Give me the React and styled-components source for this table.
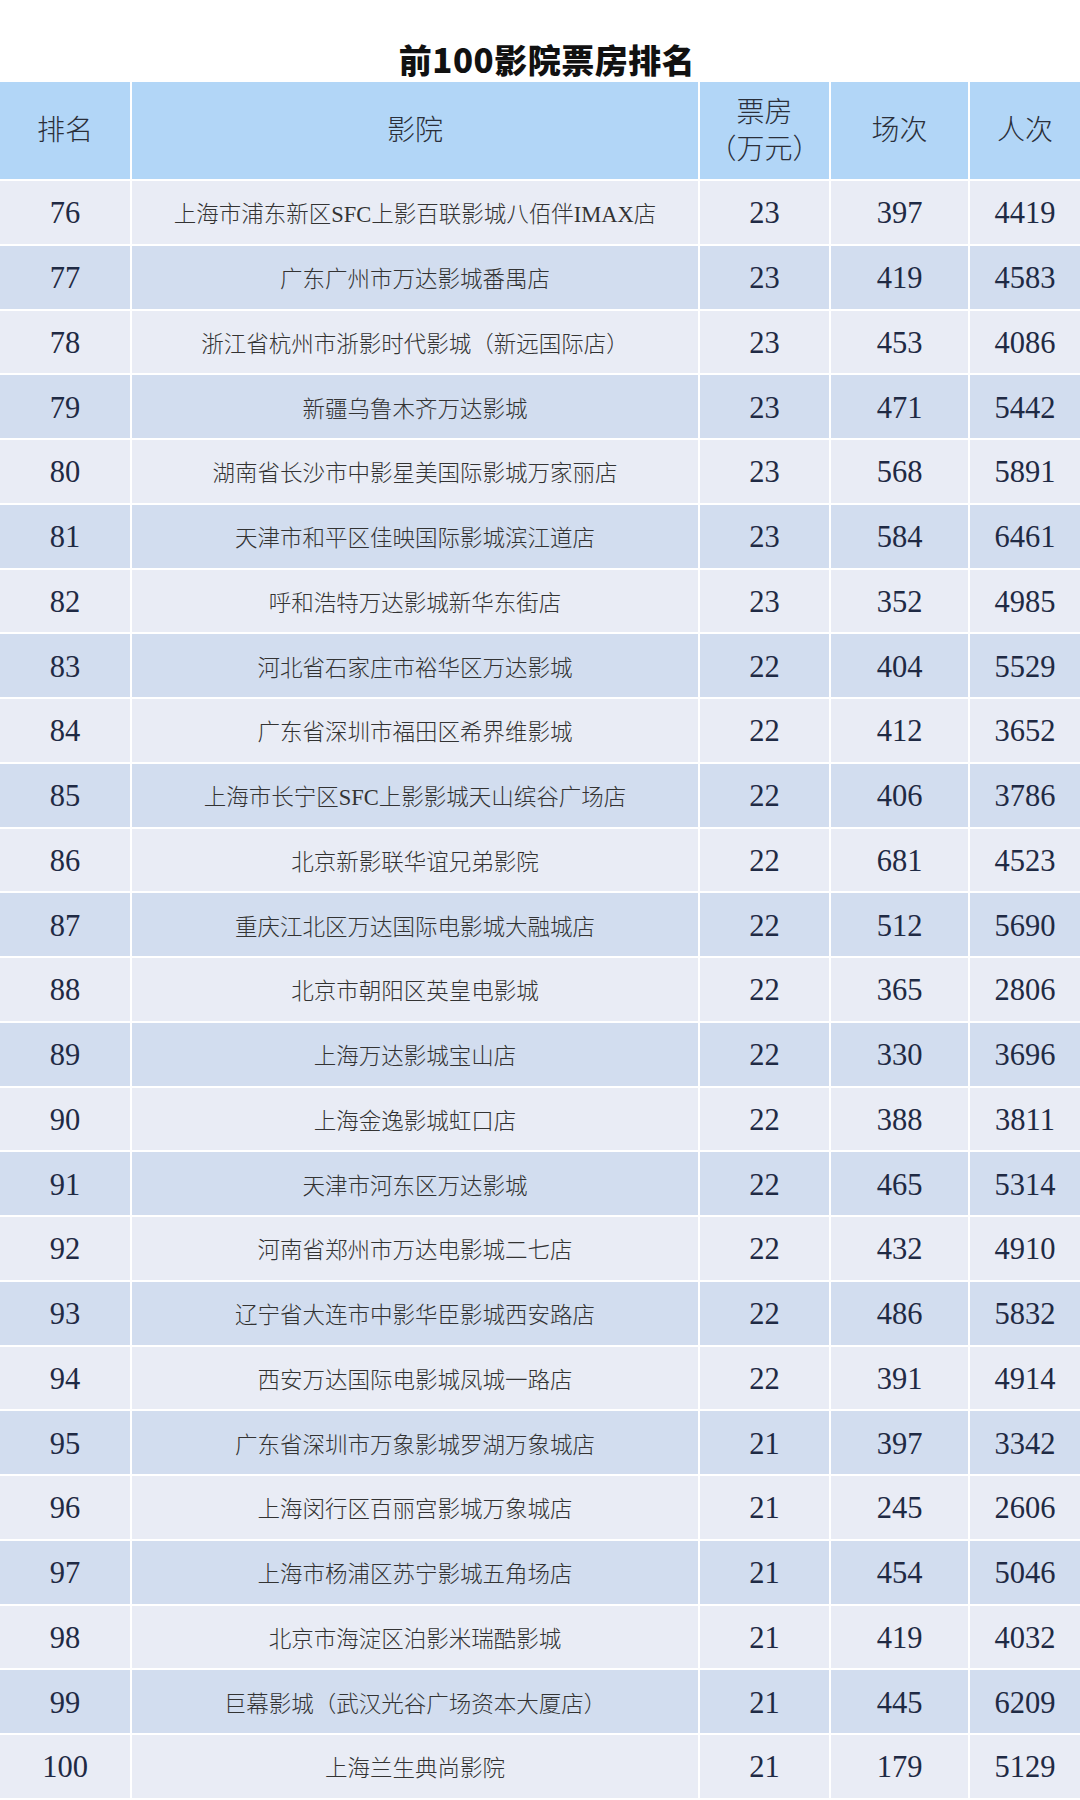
import React from 'react';
import styled, { createGlobalStyle } from 'styled-components';

const serif = `"Liberation Serif", "Noto Sans CJK SC", serif`;

const GlobalStyle = createGlobalStyle`
  html, body {
    margin: 0;
    padding: 0;
    background: #ffffff;
  }
`;

const Page = styled.div`
  width: 1080px;
  background: #ffffff;
`;

const Title = styled.h1`
  margin: 0;
  height: 82px;
  display: flex;
  align-items: flex-end;
  justify-content: center;
  padding: 0 0 6px 14px;
  box-sizing: border-box;
  font-family: "Noto Sans CJK SC", "Noto Sans", sans-serif;
  font-weight: 900;
  font-size: 33px;
  line-height: 1;
  color: #111111;
  letter-spacing: 0.5px;
`;

const Table = styled.div`
  display: grid;
  grid-template-columns: 130px 566px 129px 137px 1fr;
  grid-template-rows: 97px;
  grid-auto-rows: 62.76px;
  gap: 2px;
  background: #ffffff;
`;

const HeadCell = styled.div`
  display: flex;
  flex-direction: column;
  align-items: center;
  justify-content: center;
  background: #b2d6f7;
  font-family: ${serif};
  font-size: 28px;
  font-weight: 300;
  line-height: 37px;
  color: #2a2f3a;
  text-align: center;
`;

const Cell = styled.div`
  display: flex;
  align-items: center;
  justify-content: center;
  box-sizing: border-box;
  padding-top: ${(p) => (p.$name ? '0' : '3px')};
  background: ${(p) => (p.$alt ? '#d2ddef' : '#e9ecf5')};
  font-family: ${serif};
  font-size: ${(p) => (p.$name ? '22.5px' : '30.5px')};
  font-weight: ${(p) => (p.$name ? 300 : 400)};
  color: ${(p) => (p.$name ? '#333333' : '#1f2a44')};
  white-space: nowrap;
`;

const rows = [
  [76, '上海市浦东新区SFC上影百联影城八佰伴IMAX店', 23, 397, 4419],
  [77, '广东广州市万达影城番禺店', 23, 419, 4583],
  [78, '浙江省杭州市浙影时代影城（新远国际店）', 23, 453, 4086],
  [79, '新疆乌鲁木齐万达影城', 23, 471, 5442],
  [80, '湖南省长沙市中影星美国际影城万家丽店', 23, 568, 5891],
  [81, '天津市和平区佳映国际影城滨江道店', 23, 584, 6461],
  [82, '呼和浩特万达影城新华东街店', 23, 352, 4985],
  [83, '河北省石家庄市裕华区万达影城', 22, 404, 5529],
  [84, '广东省深圳市福田区希界维影城', 22, 412, 3652],
  [85, '上海市长宁区SFC上影影城天山缤谷广场店', 22, 406, 3786],
  [86, '北京新影联华谊兄弟影院', 22, 681, 4523],
  [87, '重庆江北区万达国际电影城大融城店', 22, 512, 5690],
  [88, '北京市朝阳区英皇电影城', 22, 365, 2806],
  [89, '上海万达影城宝山店', 22, 330, 3696],
  [90, '上海金逸影城虹口店', 22, 388, 3811],
  [91, '天津市河东区万达影城', 22, 465, 5314],
  [92, '河南省郑州市万达电影城二七店', 22, 432, 4910],
  [93, '辽宁省大连市中影华臣影城西安路店', 22, 486, 5832],
  [94, '西安万达国际电影城凤城一路店', 22, 391, 4914],
  [95, '广东省深圳市万象影城罗湖万象城店', 21, 397, 3342],
  [96, '上海闵行区百丽宫影城万象城店', 21, 245, 2606],
  [97, '上海市杨浦区苏宁影城五角场店', 21, 454, 5046],
  [98, '北京市海淀区泊影米瑞酷影城', 21, 419, 4032],
  [99, '巨幕影城（武汉光谷广场资本大厦店）', 21, 445, 6209],
  [100, '上海兰生典尚影院', 21, 179, 5129]
];

function Row({ row, alt }) {
  const [rank, name, box, shows, people] = row;
  return (
    <>
      <Cell $alt={alt}>{rank}</Cell>
      <Cell $alt={alt} $name>{name}</Cell>
      <Cell $alt={alt}>{box}</Cell>
      <Cell $alt={alt}>{shows}</Cell>
      <Cell $alt={alt}>{people}</Cell>
    </>
  );
}

export default function App() {
  return (
    <Page>
      <GlobalStyle />
      <Title>前100影院票房排名</Title>
      <Table>
        <HeadCell>排名</HeadCell>
        <HeadCell>影院</HeadCell>
        <HeadCell>
          <span>票房</span>
          <span>（万元）</span>
        </HeadCell>
        <HeadCell>场次</HeadCell>
        <HeadCell>人次</HeadCell>
        {rows.map((row, i) => (
          <Row key={row[0]} row={row} alt={i % 2 === 1} />
        ))}
      </Table>
    </Page>
  );
}
